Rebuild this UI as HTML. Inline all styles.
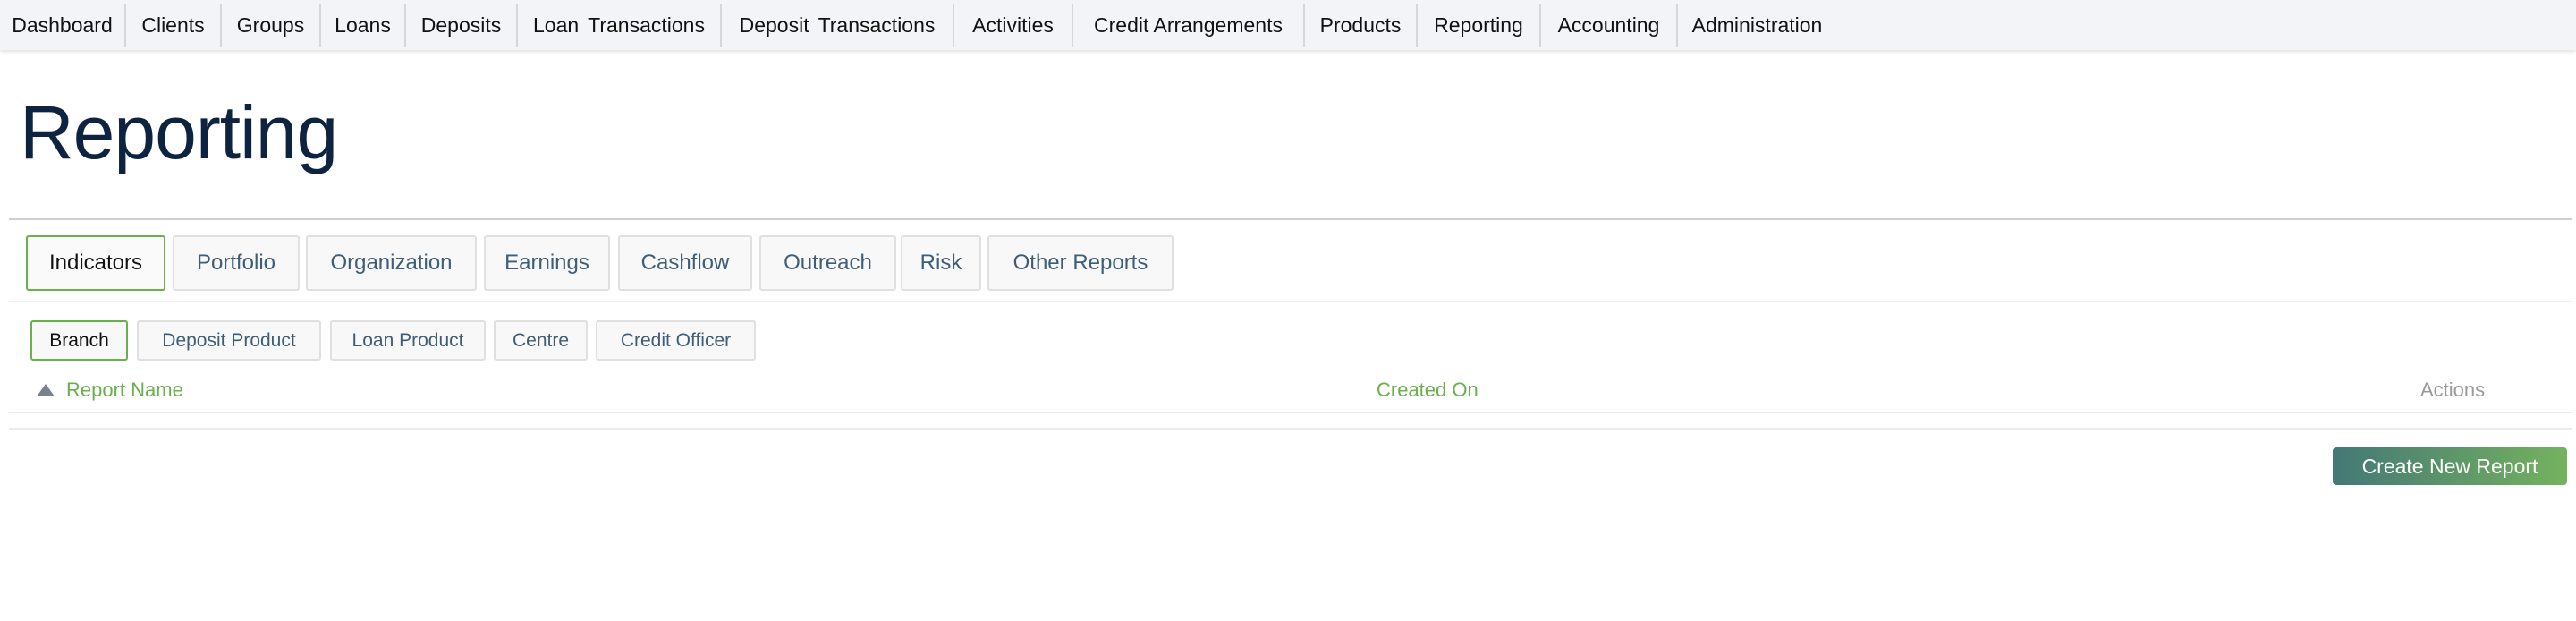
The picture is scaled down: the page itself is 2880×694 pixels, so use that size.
<!DOCTYPE html>
<html><head><meta charset="utf-8"><style>
*{box-sizing:border-box;margin:0;padding:0}
body{width:2880px;height:694px;background:#fff;font-family:"Liberation Sans",sans-serif;position:relative;overflow:hidden}
.nav{position:absolute;left:0;top:0;width:2880px;height:56px;background:#f3f4f8;box-shadow:0 2px 4px rgba(0,0,0,.12)}
.nav div{position:absolute;top:0;height:56px;line-height:56px;font-size:23px;color:#111;text-align:center;white-space:nowrap}
.nav i{position:absolute;top:4px;width:2px;height:48px;background:#d6d7db}
h1{position:absolute;left:22px;top:88px;font-size:84px;font-weight:normal;color:#0e2340;letter-spacing:-1px;line-height:120px}
.hr{position:absolute;left:10px;right:4px;height:2px}
.tab{position:absolute;top:263px;height:62px;line-height:58px;border:2px solid #e0e0e0;border-radius:3px;background:#f8f8f8;color:#3e5d78;font-size:24px;text-align:center;white-space:nowrap}
.tab.on{border-color:#6ab04c;color:#111;background:#fafafa}
.sub{position:absolute;top:358px;height:45px;line-height:41px;border:2px solid #e0e0e0;border-radius:3px;background:#f8f8f8;color:#3e5d78;font-size:21px;text-align:center;white-space:nowrap}
.sub.on{border-color:#6ab04c;color:#111}
.th{position:absolute;top:422px;font-size:22px;line-height:28px;color:#6ab04c;white-space:nowrap}
.btn{position:absolute;left:2608px;top:500px;width:262px;height:42px;border-radius:4px;background:linear-gradient(90deg,#447876,#75b25e);color:#fff;font-size:23px;line-height:42px;text-align:center}
</style></head><body>
<div class="nav">
<div style="left:0;width:139px">Dashboard</div><i style="left:139px"></i>
<div style="left:141px;width:105px">Clients</div><i style="left:246px"></i>
<div style="left:248px;width:109px">Groups</div><i style="left:357px"></i>
<div style="left:359px;width:93px">Loans</div><i style="left:452px"></i>
<div style="left:454px;width:123px">Deposits</div><i style="left:577px"></i>
<div style="left:579px;width:226px;word-spacing:4px">Loan Transactions</div><i style="left:805px"></i>
<div style="left:807px;width:258px;word-spacing:4px">Deposit Transactions</div><i style="left:1065px"></i>
<div style="left:1067px;width:131px">Activities</div><i style="left:1198px"></i>
<div style="left:1200px;width:257px">Credit Arrangements</div><i style="left:1457px"></i>
<div style="left:1459px;width:124px">Products</div><i style="left:1583px"></i>
<div style="left:1585px;width:136px">Reporting</div><i style="left:1721px"></i>
<div style="left:1723px;width:151px">Accounting</div><i style="left:1874px"></i>
<div style="left:1876px;width:177px">Administration</div>
</div>
<h1>Reporting</h1>
<div class="hr" style="top:244px;background:#cfcfcf"></div>
<div class="tab on" style="left:29px;width:156px">Indicators</div>
<div class="tab" style="left:193px;width:142px">Portfolio</div>
<div class="tab" style="left:342px;width:191px">Organization</div>
<div class="tab" style="left:541px;width:141px">Earnings</div>
<div class="tab" style="left:691px;width:150px">Cashflow</div>
<div class="tab" style="left:849px;width:153px">Outreach</div>
<div class="tab" style="left:1007px;width:90px">Risk</div>
<div class="tab" style="left:1104px;width:208px">Other Reports</div>
<div class="hr" style="top:336px;background:#eef2ec"></div>
<div class="sub on" style="left:34px;width:109px">Branch</div>
<div class="sub" style="left:153px;width:206px">Deposit Product</div>
<div class="sub" style="left:369px;width:174px">Loan Product</div>
<div class="sub" style="left:552px;width:105px">Centre</div>
<div class="sub" style="left:666px;width:179px">Credit Officer</div>
<svg style="position:absolute;left:40px;top:428px" width="22" height="16"><polygon points="11,1 21,15 1,15" fill="#7a8290"/></svg>
<div class="th" style="left:74px">Report Name</div>
<div class="th" style="left:1539px">Created On</div>
<div class="th" style="left:2706px;color:#999">Actions</div>
<div class="hr" style="top:460px;background:#ebebeb"></div>
<div class="hr" style="top:478px;background:#ebebeb"></div>
<div class="btn">Create New Report</div>
</body></html>
